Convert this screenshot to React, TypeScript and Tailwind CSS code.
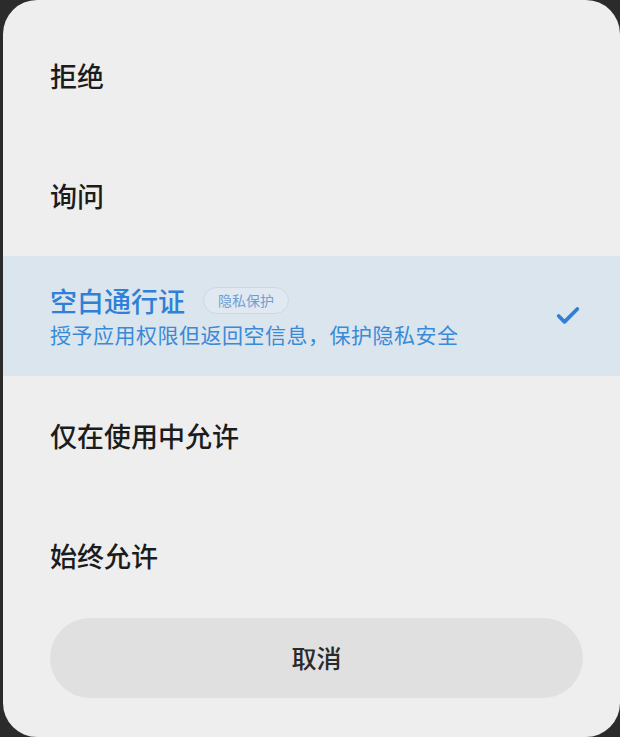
import { Check } from 'lucide-react'

type Option = { label: string; sub?: string; tag?: string; selected?: boolean }

const options: Option[] = [
  { label: '拒绝' },
  { label: '询问' },
  { label: '空白通行证', tag: '隐私保护', sub: '授予应用权限但返回空信息，保护隐私安全', selected: true },
  { label: '仅在使用中允许' },
  { label: '始终允许' },
]

const font = { fontFamily: '"Noto Sans CJK SC", "Noto Sans", sans-serif' }

export default function App() {
  return (
    <div className="w-[620px] h-[737px] bg-[#2b2b2b] pl-[3px] overflow-hidden" style={font}>
      <div className="h-full bg-[#eeeeee] rounded-[34px] pt-[16px] flex flex-col">
        {options.map((o) =>
          o.selected ? (
            <div key={o.label} className="h-[120px] bg-[#dbe5ee] flex items-center pl-[47px] pr-[38px]">
              <div className="flex-1">
                <div className="flex items-center gap-[18px]">
                  <span className="text-[27px] leading-[34px] font-medium text-[#2f80d6]">{o.label}</span>
                  <span className="h-[27px] px-[14px] rounded-full border border-[#c9d8e8] bg-[#e0e9f2] text-[14px] leading-[25px] text-[#6f9fd2]">
                    {o.tag}
                  </span>
                </div>
                <div className="text-[21px] leading-[30px] text-[#3a8ad8] mt-[1px] tracking-[0.5px]">{o.sub}</div>
              </div>
              <Check className="w-[28px] h-[28px] text-[#2f7fd6]" strokeWidth={3.2} />
            </div>
          ) : (
            <div key={o.label} className="h-[120px] flex items-center pl-[47px]">
              <span className="text-[27px] font-medium text-[#1c1c1c]">{o.label}</span>
            </div>
          ),
        )}
        <div className="pl-[47px] pr-[37px] mt-[2px]">
          <button className="w-full h-[80px] rounded-full bg-[#e0e0e0] text-[25px] font-medium text-[#2a2a2a]">
            取消
          </button>
        </div>
      </div>
    </div>
  )
}
